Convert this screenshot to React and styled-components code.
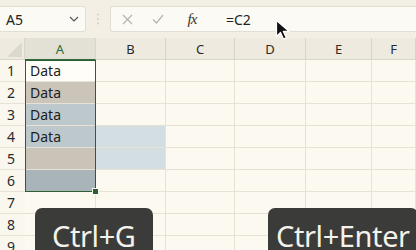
import React from "react";
import styled, { createGlobalStyle } from "styled-components";

const Global = createGlobalStyle`
  html, body { margin: 0; padding: 0; background: #fcf9f0; }
  body { width: 416px; height: 250px; overflow: hidden; font-family: "Noto Sans", "Open Sans", sans-serif; }
`;

const Frame = styled.div`
  position: relative;
  width: 416px;
  height: 250px;
  overflow: hidden;
  background: #fcf9f0;
`;

const Toolbar = styled.div`
  display: flex;
  align-items: center;
  height: 38px;
  background: #f3efe5;
  box-sizing: border-box;
`;

const NameBox = styled.div`
  display: flex;
  align-items: center;
  justify-content: space-between;
  width: 88px;
  height: 26px;
  margin-left: -2px;
  padding: 0 6px 0 8px;
  box-sizing: border-box;
  background: #fcfaf4;
  border: 1px solid #e2ded4;
  border-left: none;
  border-radius: 0 3px 3px 0;
  font-size: 14px;
  color: #222;
`;

const Grip = styled.div`
  width: 24px;
  display: flex;
  justify-content: center;
  svg { display: block; }
`;

const FormulaBox = styled.div`
  flex: 1;
  display: flex;
  align-items: center;
  height: 26px;
  box-sizing: border-box;
  background: #fcfaf4;
  border: 1px solid #e2ded4;
  border-right: none;
  border-radius: 3px 0 0 3px;
`;

const IconSlot = styled.div`
  width: ${(p) => p.$w}px;
  display: flex;
  justify-content: center;
  align-items: center;
`;

const FxText = styled.span`
  font-family: "Liberation Serif", serif;
  font-style: italic;
  font-size: 15px;
  color: #333;
  letter-spacing: -1px;
`;

const FormulaText = styled.span`
  margin-left: 1px;
  font-size: 14px;
  color: #222;
`;

const Sheet = styled.div`
  display: grid;
  grid-template-columns: 25px 71px 70px 69px 71px 66px 1fr;
  grid-auto-rows: 22px;
`;

const ColHead = styled.div`
  display: flex;
  align-items: center;
  justify-content: center;
  background: ${(p) => (p.$active ? "#e3e0d5" : "#eeeae0")};
  border-right: 1px solid #d9d5cb;
  border-bottom: 1px solid ${(p) => (p.$active ? "#2f6b34" : "#d9d5cb")};
  box-sizing: border-box;
  font-size: 13px;
  color: ${(p) => (p.$active ? "#2e6a33" : "#2a2a2a")};
`;

const Corner = styled.div`
  position: relative;
  background: #eeeae0;
  border-right: 1px solid #d9d5cb;
  border-bottom: 1px solid #d9d5cb;
  box-sizing: border-box;
  &::after {
    content: "";
    position: absolute;
    right: 2px;
    bottom: 2px;
    width: 0;
    height: 0;
    border-left: 15px solid transparent;
    border-bottom: 15px solid #dcd8ce;
  }
`;

const RowHead = styled.div`
  display: flex;
  align-items: center;
  justify-content: center;
  padding-right: 3px;
  font-size: 14px;
  color: #2a2a2a;
  background: #faf7ee;
  border-bottom: 1px solid #e6e2d8;
  box-sizing: border-box;
`;

const Cell = styled.div`
  display: flex;
  align-items: center;
  padding-left: 5px;
  font-size: 14px;
  color: #1e1e1e;
  background: ${(p) => p.$bg || "#fcf9f0"};
  border-right: 1px solid #e6e2d8;
  border-bottom: 1px solid #e6e2d8;
  box-sizing: border-box;
`;

const Selection = styled.div`
  position: absolute;
  left: 25px;
  top: 60px;
  width: 71px;
  height: 132px;
  border: 1.5px solid #2e5f33;
  box-sizing: border-box;
  pointer-events: none;
  &::after {
    content: "";
    position: absolute;
    right: -4px;
    bottom: -4px;
    width: 5px;
    height: 5px;
    background: #2e5f33;
    border: 1px solid #fcf9f0;
  }
`;

const KeyTip = styled.div`
  position: absolute;
  left: ${(p) => p.$x}px;
  top: 208px;
  height: 60px;
  padding: 0 ${(p) => p.$pad}px;
  background: #3b3b39;
  border-radius: 7px;
  color: #f4f2ec;
  font-family: "Noto Sans", "Open Sans", sans-serif;
  font-size: 29px;
  line-height: 56px;
  white-space: nowrap;
  letter-spacing: -0.4px;
`;

const Cursor = styled.svg`
  position: absolute;
  left: 275px;
  top: 19px;
`;

const cols = ["A", "B", "C", "D", "E", "F"];

const fills = {
  "1-0": "#fffdf7",
  "2-0": "#cac4b9",
  "3-0": "#bcc8cb",
  "4-0": "#bcc8cb",
  "4-1": "#d3dee3",
  "5-0": "#c9c3b8",
  "5-1": "#d3dee3",
  "6-0": "#a9b4b8",
};

export default function App() {
  const rows = [1, 2, 3, 4, 5, 6, 7, 8, 9];
  return (
    <Frame>
      <Global />
      <Toolbar>
        <NameBox>
          <span>A5</span>
          <svg width="10" height="6" viewBox="0 0 10 6">
            <path d="M1 1l4 4 4-4" fill="none" stroke="#555" strokeWidth="1.2" />
          </svg>
        </NameBox>
        <Grip>
          <svg width="2" height="12" viewBox="0 0 2 12">
            <circle cx="1" cy="1.5" r="0.9" fill="#cfcbc2" />
            <circle cx="1" cy="6" r="0.9" fill="#cfcbc2" />
            <circle cx="1" cy="10.5" r="0.9" fill="#cfcbc2" />
          </svg>
        </Grip>
        <FormulaBox>
          <IconSlot $w={32}>
            <svg width="11" height="11" viewBox="0 0 11 11">
              <path d="M1 1l9 9M10 1l-9 9" stroke="#b8b4ac" strokeWidth="1.2" />
            </svg>
          </IconSlot>
          <IconSlot $w={30}>
            <svg width="12" height="10" viewBox="0 0 12 10">
              <path d="M1 5.5l3.5 3.5L11 1" fill="none" stroke="#b8b4ac" strokeWidth="1.2" />
            </svg>
          </IconSlot>
          <IconSlot $w={38}>
            <FxText>fx</FxText>
          </IconSlot>
          <IconSlot $w={14} />
          <FormulaText>=C2</FormulaText>
        </FormulaBox>
      </Toolbar>
      <Sheet>
        <Corner />
        {cols.map((c, i) => (
          <ColHead key={c} $active={i === 0}>
            {c}
          </ColHead>
        ))}
        {rows.map((r) => (
          <React.Fragment key={r}>
            <RowHead>{r}</RowHead>
            {cols.map((c, i) => (
              <Cell key={c} $bg={fills[`${r}-${i}`]}>
                {i === 0 && r <= 4 ? "Data" : ""}
              </Cell>
            ))}
          </React.Fragment>
        ))}
      </Sheet>
      <Selection />
      <KeyTip $x={35} $pad={17}>Ctrl+G</KeyTip>
      <KeyTip $x={268} $pad={8}>Ctrl+Enter</KeyTip>
      <Cursor width="16" height="22" viewBox="0 0 16 22">
        <path d="M1.5 1.5v16l4-4 3 6.5 2.8-1.3-3-6.3h5.7z" fill="#111" stroke="#fff" strokeWidth="1.2" strokeLinejoin="round" />
      </Cursor>
    </Frame>
  );
}
